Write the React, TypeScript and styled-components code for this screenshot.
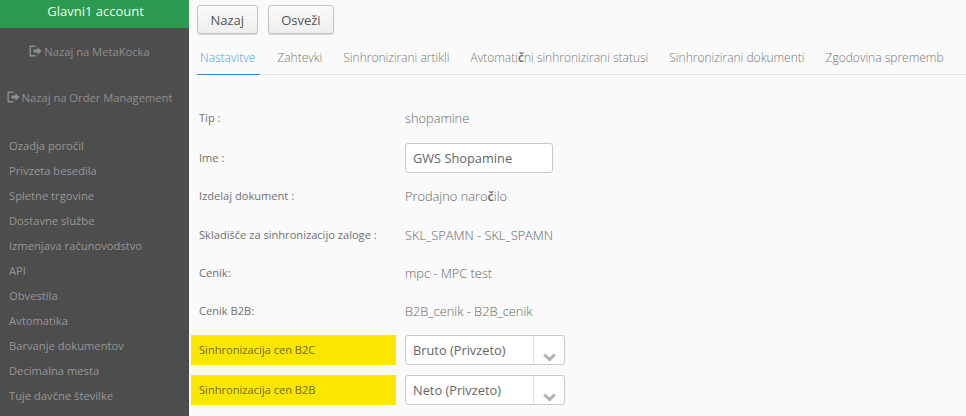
import React from "react";
import styled, { createGlobalStyle } from "styled-components";

const GlobalStyle = createGlobalStyle`
  html, body {
    margin: 0;
    padding: 0;
    height: 100%;
    overflow: hidden;
    background: #fafafa;
    font-family: "Open Sans", "Liberation Sans", sans-serif;
  }
`;

const B = styled.span`
  font-weight: 600;
  color: #666;
`;

const menuItems = [
  "Ozadja poročil",
  "Privzeta besedila",
  "Spletne trgovine",
  "Dostavne službe",
  "Izmenjava računovodstvo",
  "API",
  "Obvestila",
  "Avtomatika",
  "Barvanje dokumentov",
  "Decimalna mesta",
  "Tuje davčne številke",
];

const tabs: { label: React.ReactNode; active?: boolean }[] = [
  { label: "Nastavitve", active: true },
  { label: "Zahtevki" },
  { label: "Sinhronizirani artikli" },
  {
    label: (
      <>
        Avtomati<B>č</B>ni sinhronizirani statusi
      </>
    ),
  },
  { label: "Sinhronizirani dokumenti" },
  { label: "Zgodovina sprememb" },
];

const ExitIcon = () => (
  <svg width="13" height="12" viewBox="0 0 13 12">
    <path d="M6.5 1.2H1.2v9.6h5.3" fill="none" stroke="#8f8f8f" strokeWidth="1.4" />
    <path d="M4.5 4.5h4V2.2L12.6 6 8.5 9.8V7.5h-4z" fill="#8f8f8f" />
  </svg>
);

const Chevron = () => (
  <svg width="13" height="9" viewBox="0 0 13 9">
    <path d="M1.2 1.5l5.3 5 5.3-5" fill="none" stroke="#b0b0b0" strokeWidth="3" />
  </svg>
);

export default function App() {
  return (
    <Page>
      <GlobalStyle />
      <Sidebar>
        <Account>Glavni1 account</Account>
        <BackLink>
          <ExitIcon />
          Nazaj na MetaKocka
        </BackLink>
        <BackLink>
          <ExitIcon />
          Nazaj na Order Management
        </BackLink>
        <Menu>
          {menuItems.map((item) => (
            <MenuItem key={item}>{item}</MenuItem>
          ))}
        </Menu>
      </Sidebar>
      <Main>
        <Toolbar>
          <Button>Nazaj</Button>
          <Button>Osveži</Button>
        </Toolbar>
        <TabBar>
          {tabs.map((tab, i) => (
            <Tab key={i} $active={tab.active}>
              {tab.label}
            </Tab>
          ))}
        </TabBar>
        <Form>
          <Row $height={39.8}>
            <Label>Tip :</Label>
            <Value>shopamine</Value>
          </Row>
          <Row>
            <Label>Ime :</Label>
            <TextInput>GWS Shopamine</TextInput>
          </Row>
          <Row>
            <Label>Izdelaj dokument :</Label>
            <Value>
              Prodajno naro<B>č</B>ilo
            </Value>
          </Row>
          <Row>
            <Label>Skladišče za sinhronizacijo zaloge :</Label>
            <Value>SKL_SPAMN - SKL_SPAMN</Value>
          </Row>
          <Row>
            <Label>Cenik:</Label>
            <Value>mpc - MPC test</Value>
          </Row>
          <Row $height={37.4}>
            <Label>Cenik B2B:</Label>
            <Value>B2B_cenik - B2B_cenik</Value>
          </Row>
          <Row $height={40.6}>
            <Label $marked>Sinhronizacija cen B2C</Label>
            <Select>
              <SelectText>Bruto (Privzeto)</SelectText>
              <SelectArrow>
                <Chevron />
              </SelectArrow>
            </Select>
          </Row>
          <Row>
            <Label $marked>Sinhronizacija cen B2B</Label>
            <Select>
              <SelectText>Neto (Privzeto)</SelectText>
              <SelectArrow>
                <Chevron />
              </SelectArrow>
            </Select>
          </Row>
        </Form>
      </Main>
    </Page>
  );
}

const Page = styled.div`
  display: flex;
  width: 966px;
  height: 416px;
  overflow: hidden;
`;

const Sidebar = styled.aside`
  width: 189px;
  flex: none;
  background: #4d4d4d;
`;

const Account = styled.div`
  height: 28px;
  padding-left: 2px;
  background: #2b9b4f;
  color: #eafbe9;
  font-size: 13px;
  line-height: 22px;
  text-align: center;
`;

const BackLink = styled.div`
  height: 46px;
  padding-right: 10px;
  display: flex;
  align-items: center;
  justify-content: center;
  gap: 2px;
  color: #8f8f8f;
  font-size: 11.2px;
`;

const Menu = styled.nav`
  margin-top: 13px;
  padding-left: 9px;
`;

const MenuItem = styled.div`
  height: 25px;
  line-height: 25px;
  font-size: 11.2px;
  color: #979797;
  white-space: nowrap;
`;

const Main = styled.main`
  flex: 1;
  min-width: 0;
  padding: 5px 0 0 8px;
  background: #fafafa;
`;

const Toolbar = styled.div`
  display: flex;
  gap: 10px;
`;

const Button = styled.button`
  height: 29px;
  padding: 0 12.5px;
  border: 1px solid #c4c4c4;
  border-radius: 3px;
  background: linear-gradient(#fbfbfb, #eeeeee);
  box-shadow: 0 1px 1px rgba(0, 0, 0, 0.15);
  font-family: inherit;
  font-size: 13px;
  color: #555;
`;

const TabBar = styled.div`
  display: flex;
  margin-top: 6px;
  height: 35px;
  box-sizing: border-box;
  border-bottom: 1px solid #e2e2e2;
`;

const Tab = styled.div<{ $active?: boolean }>`
  height: 35px;
  box-sizing: border-box;
  padding: ${(p) => (p.$active ? "0 5px 0 3px" : "0 3px")};
  margin-right: ${(p) => (p.$active ? "14px" : "15px")};
  line-height: 36px;
  font-size: 12px;
  font-weight: 300;
  white-space: nowrap;
  color: ${(p) => (p.$active ? "#4a9be8" : "#777")};
  border-bottom: ${(p) => (p.$active ? "1px solid #2b8be6" : "none")};
`;

const Form = styled.div`
  margin-top: 23.5px;
  margin-left: -6px;
`;

const Row = styled.div<{ $height?: number }>`
  display: grid;
  grid-template-columns: 205px 1fr;
  column-gap: 9px;
  align-items: center;
  height: ${(p) => p.$height ?? 38.6}px;
`;

const Label = styled.div<{ $marked?: boolean }>`
  height: 30px;
  line-height: 30px;
  padding-left: 8px;
  font-size: 11.1px;
  color: ${(p) => (p.$marked ? "#6f6d10" : "#707070")};
  background: ${(p) => (p.$marked ? "#fbe600" : "transparent")};
  white-space: nowrap;
`;

const Value = styled.div`
  font-size: 12.8px;
  font-weight: 300;
  color: #666;
  white-space: nowrap;
`;

const TextInput = styled.div`
  width: 148px;
  height: 30px;
  line-height: 28px;
  box-sizing: border-box;
  padding-left: 7px;
  border: 1px solid #c8c8c8;
  border-radius: 3px;
  background: #fff;
  font-size: 12.8px;
  color: #666;
`;

const Select = styled.div`
  width: 160px;
  height: 30px;
  box-sizing: border-box;
  display: flex;
  border: 1px solid #c8c8c8;
  border-radius: 3px;
  background: #fff;
`;

const SelectText = styled.div`
  flex: 1;
  padding-left: 7px;
  line-height: 28px;
  font-size: 12.8px;
  color: #666;
`;

const SelectArrow = styled.div`
  width: 31px;
  border-left: 1px solid #e2e2e2;
  display: flex;
  align-items: flex-end;
  justify-content: center;
  padding-bottom: 2px;
  box-sizing: border-box;
`;
